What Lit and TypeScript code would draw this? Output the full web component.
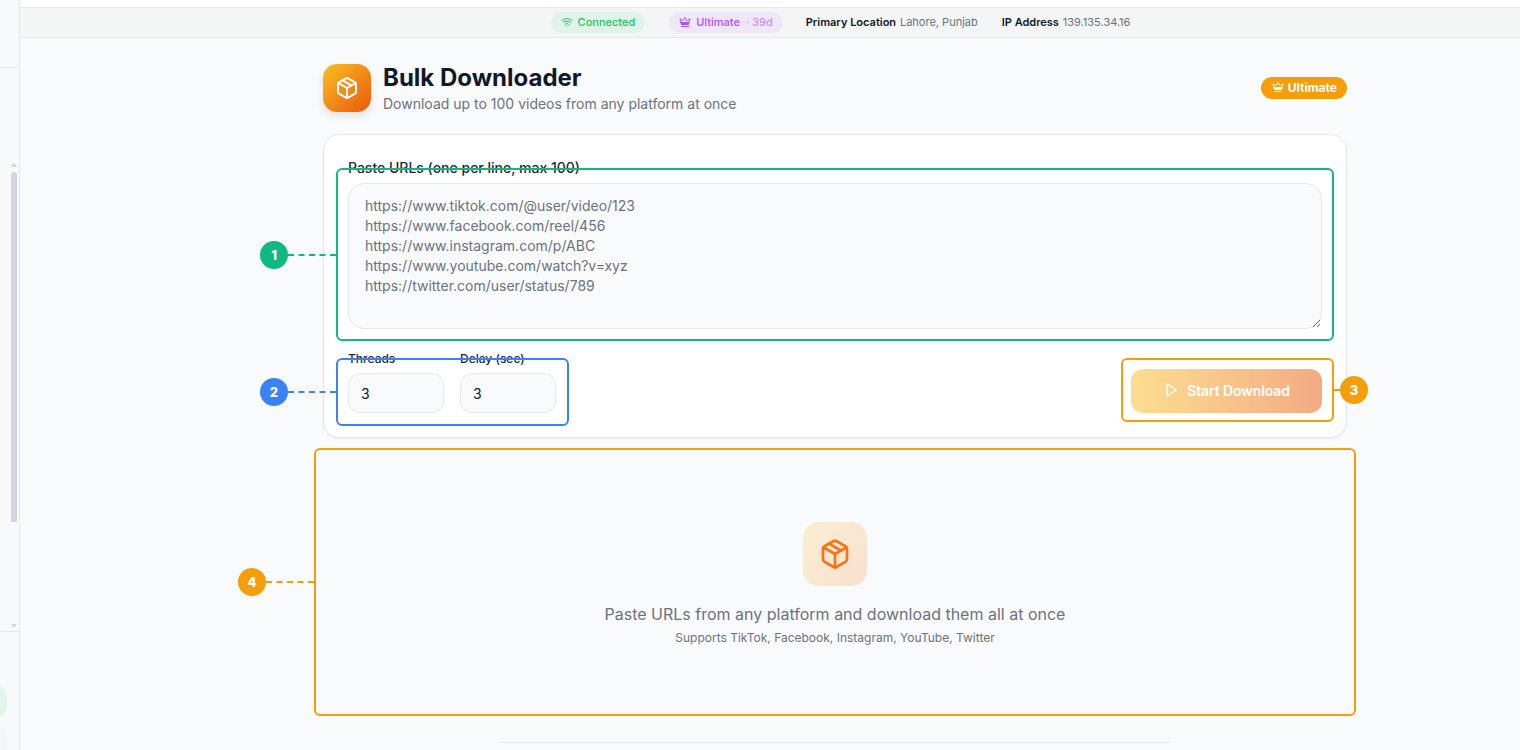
import { LitElement, html, css, svg } from 'lit';
import { customElement } from 'lit/decorators.js';

const packageIcon = svg`
  <path d="M11 21.73a2 2 0 0 0 2 0l7-4A2 2 0 0 0 21 16V8a2 2 0 0 0-1-1.73l-7-4a2 2 0 0 0-2 0l-7 4A2 2 0 0 0 3 8v8a2 2 0 0 0 1 1.73z" />
  <path d="M12 22V12" />
  <polyline points="3.29 7 12 12 20.71 7" />
  <path d="m7.5 4.27 9 5.15" />
`;

// outline crown with the lower part filled in, as in the reference
const crownIcon = svg`
  <path d="M11.562 3.266a.5.5 0 0 1 .876 0L15.39 8.87a1 1 0 0 0 1.516.294L21.183 5.5a.5.5 0 0 1 .798.519l-2.834 10.246a1 1 0 0 1-.956.734H5.81a1 1 0 0 1-.957-.734L2.02 6.02a.5.5 0 0 1 .798-.519l4.276 3.664a1 1 0 0 0 1.516-.294z" />
  <path class="solid" d="M4.5 13h15l-1 4h-13z" />
  <path d="M5 21h14" />
`;

const wifiIcon = svg`
  <path d="M12 20h.01" />
  <path d="M2 8.82a15 15 0 0 1 20 0" />
  <path d="M5 12.859a10 10 0 0 1 14 0" />
  <path d="M8.5 16.429a5 5 0 0 1 7 0" />
`;

const PLACEHOLDER = `https://www.tiktok.com/@user/video/123
https://www.facebook.com/reel/456
https://www.instagram.com/p/ABC
https://www.youtube.com/watch?v=xyz
https://twitter.com/user/status/789`;

@customElement('app-root')
export class AppRoot extends LitElement {
  static override styles = css`
    :host {
      display: flex;
      position: relative;
      width: 100%;
      height: 100vh;
      overflow: hidden;
      background: #f9fafb;
      font-family: Inter, 'Noto Sans', sans-serif;
      color: #111827;
    }

    svg {
      display: block;
      fill: none;
      stroke: currentColor;
      stroke-linecap: round;
      stroke-linejoin: round;
    }

    svg .solid {
      fill: currentColor;
    }

    /* sidebar, only its right edge is on screen */
    .sidebar {
      flex: 0 0 20px;
      box-sizing: border-box;
      display: flex;
      flex-direction: column;
      background: #f8f9fb;
      border-right: 1px solid #e5e7eb;
    }

    .side-head {
      flex: 0 0 67px;
      border-bottom: 1px solid #e5e7eb;
    }

    .side-scroll {
      flex: 1;
      display: flex;
      flex-direction: column;
      align-items: flex-end;
      padding: 95px 2px 3px 0;
      min-height: 0;
    }

    .arrow {
      width: 0;
      height: 0;
      margin-right: 0;
      border-left: 3px solid transparent;
      border-right: 3px solid transparent;
    }

    .arrow.up {
      border-bottom: 4px solid #d1d5db;
    }

    .arrow.down {
      margin-top: auto;
      border-top: 4px solid #d1d5db;
    }

    .thumb {
      width: 6px;
      height: 350px;
      margin-top: 5px;
      border-radius: 3px 3px 0 0;
      background: #d1d5e0;
    }

    .side-foot {
      flex: 0 0 119px;
      box-sizing: border-box;
      border-top: 1px solid #e5e7eb;
      padding-top: 54px;
      display: flex;
      flex-direction: column;
      gap: 11px;
      overflow: hidden;
    }

    .side-pill {
      flex: 0 0 31px;
      width: 27px;
      margin-left: -20px;
      border-radius: 10px;
      background: #e2f5e9;
    }

    .side-pill.muted {
      background: #f3f4f6;
    }

    /* main column */
    .main {
      flex: 1;
      min-width: 0;
      display: flex;
      flex-direction: column;
    }

    .topbar {
      flex: 0 0 8px;
      box-sizing: border-box;
      background: #fff;
      border-bottom: 1px solid #e5e7eb;
    }

    .status {
      flex: 0 0 30px;
      box-sizing: border-box;
      display: flex;
      align-items: center;
      justify-content: center;
      gap: 24px;
      padding-left: 141px;
      background: #f4f6f6;
      border-bottom: 1px solid #e5e7eb;
      font-size: 11px;
      line-height: 16px;
    }

    .pill {
      display: flex;
      align-items: center;
      gap: 5px;
      box-sizing: border-box;
      height: 21px;
      padding: 0 10px 2px;
      border-radius: 999px;
      font-weight: 500;
    }

    .pill.ok {
      background: #dff3e8;
      color: #22c55e;
    }

    .pill.plan {
      margin-right: -1px;
      background: #f0e6f9;
      color: #a855f7;
    }

    .pill .days {
      opacity: 0.6;
    }

    .info {
      padding-bottom: 2px;
      color: #6b7280;
    }

    .info b {
      margin-right: 0.8px;
      font-weight: 600;
      color: #111827;
    }

    .content {
      flex: 1;
      display: flex;
      flex-direction: column;
      align-items: center;
      padding: 24px 0 0 130px;
    }

    .page {
      width: 1024px;
    }

    .header {
      display: flex;
      align-items: center;
      gap: 12px;
      margin-bottom: 20px;
    }

    .logo {
      flex: 0 0 48px;
      height: 48px;
      display: flex;
      align-items: center;
      justify-content: center;
      border-radius: 14px;
      background: linear-gradient(135deg, #fbbf24, #ea580c);
      box-shadow: 0 4px 8px rgba(0, 0, 0, 0.1);
      color: #fff;
    }

    .titles {
      flex: 1;
    }

    h1 {
      margin: 0;
      font-size: 24px;
      line-height: 32px;
      font-weight: 700;
      color: #111827;
    }

    .subtitle {
      margin: 0;
      font-size: 14px;
      line-height: 20px;
      color: #6b7280;
    }

    .badge {
      display: flex;
      align-items: center;
      gap: 4px;
      box-sizing: border-box;
      height: 22px;
      padding: 0 10px 2px 11px;
      border-radius: 999px;
      background: #f59e0b;
      color: #fff;
      font-size: 12px;
      font-weight: 700;
    }

    .card {
      box-sizing: border-box;
      height: 304px;
      padding: 24px;
      background: #fff;
      border: 1px solid #e5e7eb;
      border-radius: 16px;
      box-shadow: 0 1px 2px rgba(0, 0, 0, 0.05);
    }

    label {
      display: block;
      color: #1f2937;
    }

    .urls-label {
      margin-bottom: 6px;
      font-size: 14px;
      line-height: 18px;
      font-weight: 500;
    }

    textarea {
      display: block;
      box-sizing: border-box;
      width: 100%;
      height: 146px;
      margin-bottom: 24px;
      padding: 12px 16px;
      background: #f9fafb;
      border: 1px solid #e5e7eb;
      border-radius: 16px;
      outline: none;
      resize: vertical;
      font: 14px/20px Inter, 'Noto Sans', sans-serif;
      color: #111827;
    }

    textarea::placeholder {
      color: #6b7280;
      opacity: 1;
    }

    .controls {
      display: flex;
      align-items: flex-end;
      justify-content: space-between;
    }

    .fields {
      display: flex;
      gap: 16px;
    }

    .field label {
      margin-bottom: 8px;
      font-size: 12px;
      line-height: 12px;
      font-weight: 500;
    }

    input {
      display: block;
      box-sizing: border-box;
      width: 96px;
      height: 40px;
      padding: 0 12px;
      background: #f9fafb;
      border: 1px solid #e5e7eb;
      border-radius: 12px;
      outline: none;
      font: 14px Inter, 'Noto Sans', sans-serif;
      color: #111827;
    }

    .start {
      display: flex;
      align-items: center;
      justify-content: center;
      gap: 8px;
      box-sizing: border-box;
      width: 191px;
      height: 44px;
      padding: 0 0 2px;
      border: 0;
      border-radius: 12px;
      background: linear-gradient(90deg, #fbbf24, #ea580c);
      opacity: 0.5;
      color: #fff;
      font: 600 14px Inter, 'Noto Sans', sans-serif;
      letter-spacing: -0.12px;
    }

    .empty {
      box-sizing: border-box;
      height: 304px;
      padding-top: 84px;
      display: flex;
      flex-direction: column;
      align-items: center;
    }

    .empty-icon {
      width: 64px;
      height: 64px;
      margin-bottom: 16px;
      display: flex;
      align-items: center;
      justify-content: center;
      border-radius: 16px;
      background: linear-gradient(135deg, #faefd2, #f9dfd0);
      color: #f97316;
    }

    .empty-title {
      font-size: 16px;
      line-height: 24px;
      color: #6b7280;
    }

    .empty-sub {
      margin-top: 4px;
      font-size: 12px;
      line-height: 16px;
      color: #6b7280;
    }

    .rule {
      width: 672px;
      border-top: 1px solid #e5e7eb;
    }

    /* tutorial annotations lying over the page */
    .box {
      position: absolute;
      box-sizing: border-box;
      border: 2px solid;
      border-radius: 6px;
    }

    .num {
      position: absolute;
      width: 28px;
      height: 28px;
      border-radius: 50%;
      display: flex;
      align-items: center;
      justify-content: center;
      color: #fff;
      font-size: 13px;
      font-weight: 800;
    }

    .dash {
      position: absolute;
      height: 0;
      border-top: 2px dashed;
    }

    .green {
      border-color: #10b981;
    }
    .blue {
      border-color: #3b82f6;
    }
    .amber {
      border-color: #f59e0b;
    }

    .num.green {
      background: #10b981;
    }
    .num.blue {
      background: #3b82f6;
    }
    .num.amber {
      background: #f59e0b;
    }

    .b1 {
      left: 336px;
      top: 168px;
      width: 998px;
      height: 173px;
    }
    .b2 {
      left: 336px;
      top: 358px;
      width: 233px;
      height: 68px;
    }
    .b3 {
      left: 1121px;
      top: 358px;
      width: 213px;
      height: 64px;
    }
    .b4 {
      left: 314px;
      top: 448px;
      width: 1042px;
      height: 268px;
    }

    .n1 {
      left: 260px;
      top: 241px;
    }
    .n2 {
      left: 260px;
      top: 378px;
    }
    .n3 {
      left: 1340px;
      top: 376px;
    }
    .n4 {
      left: 238px;
      top: 568px;
    }

    .d1 {
      left: 288px;
      top: 254px;
      width: 48px;
    }
    .d2 {
      left: 288px;
      top: 391px;
      width: 48px;
    }
    .d3 {
      left: 1334px;
      top: 389px;
      width: 6px;
    }
    .d4 {
      left: 266px;
      top: 581px;
      width: 48px;
    }
  `;

  override render() {
    return html`
      <aside class="sidebar">
        <div class="side-head"></div>
        <div class="side-scroll">
          <div class="arrow up"></div>
          <div class="thumb"></div>
          <div class="arrow down"></div>
        </div>
        <div class="side-foot">
          <div class="side-pill"></div>
          <div class="side-pill muted"></div>
        </div>
      </aside>

      <div class="main">
        <div class="topbar"></div>
        <div class="status">
          <span class="pill ok">
            <svg width="12" height="12" viewBox="0 0 24 24" stroke-width="2">${wifiIcon}</svg>
            Connected
          </span>
          <span class="pill plan">
            <svg width="12" height="12" viewBox="0 0 24 24" stroke-width="2">${crownIcon}</svg>
            <span>Ultimate <span class="days">&nbsp;· 39d</span></span>
          </span>
          <span class="info"><b>Primary Location</b> Lahore, Punjab</span>
          <span class="info"><b>IP Address</b> 139.135.34.16</span>
        </div>

        <div class="content">
          <div class="page">
            <header class="header">
              <div class="logo">
                <svg width="24" height="24" viewBox="0 0 24 24" stroke-width="2">${packageIcon}</svg>
              </div>
              <div class="titles">
                <h1>Bulk Downloader</h1>
                <p class="subtitle">Download up to 100 videos from any platform at once</p>
              </div>
              <span class="badge">
                <svg width="12" height="12" viewBox="0 0 24 24" stroke-width="2">${crownIcon}</svg>
                Ultimate
              </span>
            </header>

            <section class="card">
              <label class="urls-label">Paste URLs (one per line, max 100)</label>
              <textarea placeholder=${PLACEHOLDER}></textarea>
              <div class="controls">
                <div class="fields">
                  <div class="field">
                    <label>Threads</label>
                    <input type="text" value="3" />
                  </div>
                  <div class="field">
                    <label>Delay (sec)</label>
                    <input type="text" value="3" />
                  </div>
                </div>
                <button class="start" disabled>
                  <svg width="16" height="16" viewBox="0 0 24 24" stroke-width="2">
                    <polygon points="6 3 20 12 6 21 6 3" />
                  </svg>
                  Start Download
                </button>
              </div>
            </section>

            <section class="empty">
              <div class="empty-icon">
                <svg width="32" height="32" viewBox="0 0 24 24" stroke-width="2">${packageIcon}</svg>
              </div>
              <div class="empty-title">Paste URLs from any platform and download them all at once</div>
              <div class="empty-sub">Supports TikTok, Facebook, Instagram, YouTube, Twitter</div>
            </section>
          </div>
          <div class="rule"></div>
        </div>
      </div>

      <div class="box b1 green"></div>
      <div class="box b2 blue"></div>
      <div class="box b3 amber"></div>
      <div class="box b4 amber"></div>
      <div class="dash d1 green"></div>
      <div class="dash d2 blue"></div>
      <div class="dash d3 amber"></div>
      <div class="dash d4 amber"></div>
      <div class="num n1 green">1</div>
      <div class="num n2 blue">2</div>
      <div class="num n3 amber">3</div>
      <div class="num n4 amber">4</div>
    `;
  }
}
